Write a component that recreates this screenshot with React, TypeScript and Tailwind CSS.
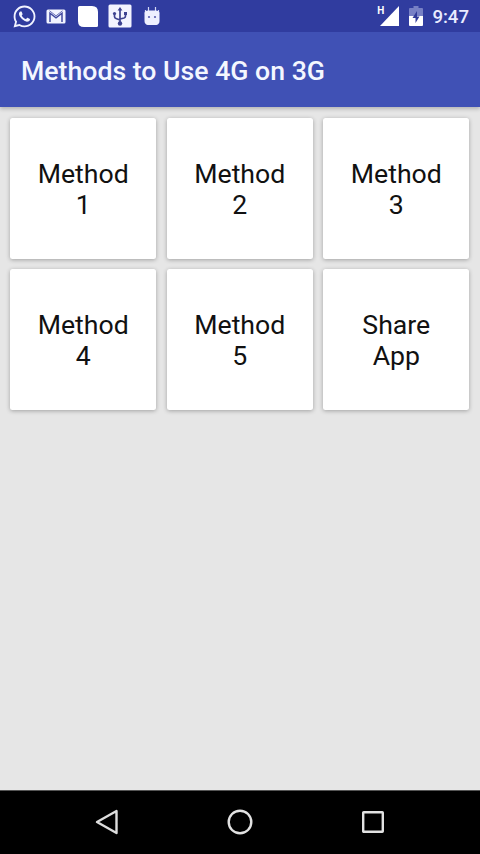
import { FaWhatsapp } from "react-icons/fa";

const cards: [string, string][] = [
  ["Method", "1"],
  ["Method", "2"],
  ["Method", "3"],
  ["Method", "4"],
  ["Method", "5"],
  ["Share", "App"],
];

function GmailIcon() {
  return (
    <svg className="h-[15px] w-5" viewBox="0 0 20 15">
      <rect x="0.5" y="0.5" width="19" height="14" rx="1.5" fill="#f1f3ff" />
      <path d="M4 13V4.2L10 8.8l6-4.6V13" fill="none" stroke="#4149a0" strokeWidth="1.5" />
      <path d="M3.500 1.800L10 6.800l6.500-5" fill="none" stroke="#6a70b8" strokeWidth="1" />
    </svg>
  );
}

function NoteIcon() {
  return (
    <svg className="h-[21px] w-5" viewBox="0 0 20 21">
      <path d="M1.500 0H14q3 0 4.500 1.500T20 6v13.500q0 1.500-1.500 1.500H6q-3 0-4.500-1.500T0 15V1.500Q0 0 1.500 0z" fill="#fff" />
    </svg>
  );
}

function UsbIcon() {
  return (
    <svg className="h-6 w-6" viewBox="0 0 24 24">
      <rect x="0.500" y="0.500" width="23" height="23" rx="1.500" fill="#f3f4ff" />
      <g fill="none" stroke="#3d4290" strokeWidth="1.700">
        <path d="M12 5v14M6.500 10v2.500q0 1.500 1.500 2L12 16M17.500 9v3q0 1.500-1.500 2L12 15" />
      </g>
      <path d="M12 3l2.400 3.500H9.600z" fill="#3d4290" />
      <circle cx="6.500" cy="9.500" r="1.600" fill="#3d4290" />
      <rect x="16" y="8" width="3" height="3" fill="#3d4290" />
      <circle cx="12" cy="19.500" r="2.200" fill="#3d4290" />
    </svg>
  );
}

function DroidIcon() {
  return (
    <svg className="h-[19px] w-4" viewBox="0 0 16 19">
      <path d="M4.500 0v4M11.500 0v4M1.500 3v4M14.500 3v4" stroke="#d4d8f5" strokeWidth="1.200" />
      <path d="M0.500 6q0-2.500 4-2.500h7q4 0 4 2.500v8q0 3-3 4h-9q-3-1-3-4z" fill="#eef0ff" />
      <circle cx="5" cy="10" r="1.100" fill="#5a60b0" />
      <circle cx="11" cy="10" r="1.100" fill="#5a60b0" />
    </svg>
  );
}

function BatteryIcon() {
  return (
    <svg className="h-5 w-[14px]" viewBox="0 0 14 20">
      <path d="M4.500 0h5v2H13q1 0 1 1v7H0V3q0-1 1-1h3.500z" fill="#7780c5" />
      <path d="M0 10h14v9q0 1-1 1H1q-1 0-1-1z" fill="#fff" />
      <path d="M8 5L3.500 12H6.500v5L10.500 10.500H8z" fill="#303a98" />
    </svg>
  );
}

export default function App() {
  return (
    <div className="flex h-[854px] w-[480px] flex-col overflow-hidden bg-[#e6e6e6] font-['Roboto',sans-serif]">
      <header className="z-10 shrink-0 shadow-[0_2px_4px_rgba(0,0,0,0.22)]">
        <div className="flex h-8 items-center justify-between bg-[#303c9f] pr-[11px] pl-3">
          <div className="flex items-center">
            <FaWhatsapp className="mr-[9px] size-[25px] text-[#f1f3ff]" />
            <GmailIcon />
            <span className="ml-3"><NoteIcon /></span>
            <span className="ml-[10px]"><UsbIcon /></span>
            <span className="ml-3"><DroidIcon /></span>
          </div>
          <div className="flex h-8 items-center">
            <span className="-mr-[4px] self-start pt-[6px] text-[10px] leading-[10px] font-bold text-white">H</span>
            <svg className="mr-[10px] h-[20px] w-[19px]" viewBox="0 0 19 20">
              <path d="M19 0v20H0z" fill="#fff" />
            </svg>
            <BatteryIcon />
            <span className="ml-[9px] pt-[2px] text-[18.600px] leading-[30px] font-medium text-[#e9ecff]">9:47</span>
          </div>
        </div>
        <div className="flex h-[74.500px] items-center bg-[#4051b5] pl-[21px]">
          <h1 className="pt-[4px] text-[26.670px] font-medium text-[#f4f7ff]">Methods to Use 4G on 3G</h1>
        </div>
      </header>
      <main className="grid flex-1 grid-cols-3 content-start gap-x-[10.500px] gap-y-[10px] pt-[11px] pr-[10.700px] pl-[10.200px]">
        {cards.map(([top, bottom]) => (
          <button
            key={top + bottom}
            className="flex h-[141px] flex-col items-center justify-center rounded-[2.500px] bg-white pt-[4px] text-[26.670px] leading-[31.500px] text-[#111] shadow-[0_1px_4px_rgba(0,0,0,0.3)]"
          >
            <span>{top}</span>
            <span>{bottom}</span>
          </button>
        ))}
      </main>
      <nav className="flex h-16 shrink-0 items-center justify-between border-t border-[#555] bg-black px-[95px] pb-[2px]">
        <svg className="h-[26px] w-[24px]" viewBox="0 0 24 26">
          <path d="M21.500 2v22L2 13z" fill="none" stroke="#ddd" strokeWidth="2.400" strokeLinejoin="round" />
        </svg>
        <svg className="size-[26px]" viewBox="0 0 26 26">
          <circle cx="13" cy="13" r="11.300" fill="none" stroke="#e2e2e2" strokeWidth="2.400" />
        </svg>
        <svg className="size-[24px]" viewBox="0 0 24 24">
          <rect x="2.200" y="2.200" width="19.600" height="19.600" rx="0.500" fill="none" stroke="#e2e2e2" strokeWidth="2.400" />
        </svg>
      </nav>
    </div>
  );
}
